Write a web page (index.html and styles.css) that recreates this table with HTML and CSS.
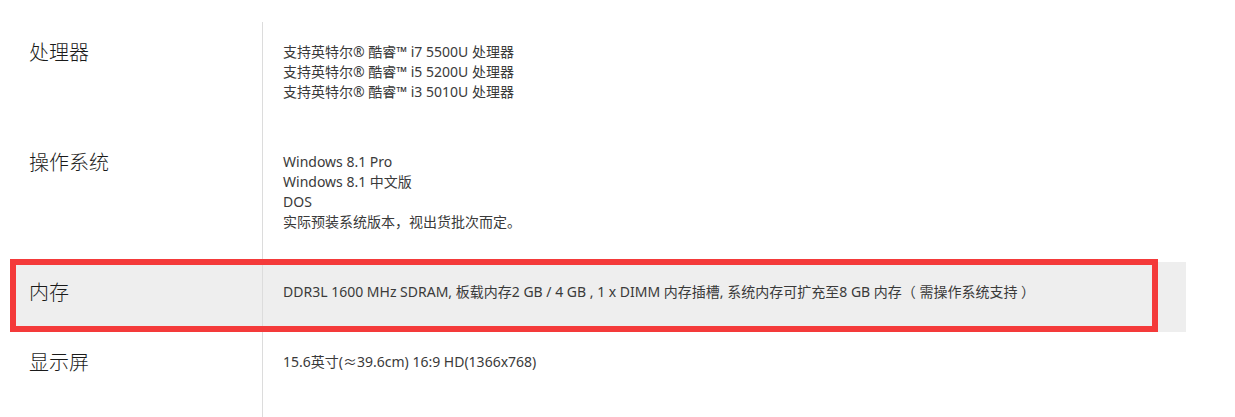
FILE: index.html
```html
<!DOCTYPE html>
<html lang="zh-CN">
<head>
<meta charset="utf-8">
<title>规格参数</title>
<link rel="stylesheet" href="styles.css">
</head>
<body>
<div class="specs">
  <div class="row">
    <div class="label">处理器</div>
    <div class="value">
      <p>支持英特尔® 酷睿™ i7 5500U 处理器</p>
      <p>支持英特尔® 酷睿™ i5 5200U 处理器</p>
      <p>支持英特尔® 酷睿™ i3 5010U 处理器</p>
    </div>
  </div>
  <div class="row">
    <div class="label">操作系统</div>
    <div class="value">
      <p>Windows 8.1 Pro</p>
      <p>Windows 8.1 中文版</p>
      <p>DOS</p>
      <p>实际预装系统版本，视出货批次而定。</p>
    </div>
  </div>
  <div class="row active">
    <div class="label">内存</div>
    <div class="value">
      <p>DDR3L 1600 MHz SDRAM, 板载内存2 GB / 4 GB , 1 x DIMM 内存插槽, 系统内存可扩充至8 GB 内存（ 需操作系统支持 ）</p>
    </div>
    <div class="highlight"></div>
  </div>
  <div class="row last">
    <div class="label">显示屏</div>
    <div class="value">
      <p>15.6英寸(≈39.6cm) 16:9 HD(1366x768)</p>
    </div>
  </div>
</div>
</body>
</html>
```

FILE: styles.css
```css
html, body {
  margin: 0;
  padding: 0;
  background: #fff;
}

body {
  font-family: "Noto Sans CJK SC", "Open Sans", sans-serif;
  color: #333;
  overflow: hidden;
}

.specs {
  margin: 22px 0 0 12px;
  width: 1174px;
}

.row {
  position: relative;
  display: grid;
  grid-template-columns: 250px 1fr;
}

.row.active {
  background: #eeeeee;
}

.label {
  padding: 20px 0 30px 17px;
  font-size: 20px;
  font-weight: 300;
  line-height: 20px;
  color: #1a1a1a;
}

.value {
  border-left: 1px solid #dcdcdc;
  padding: 20px 0 30px 20px;
  font-family: "Noto Sans", "Noto Sans CJK SC", sans-serif;
  font-size: 14px;
  line-height: 20px;
  color: #3a3a3a;
}

.value p {
  margin: 0;
}

.row.last .value {
  padding-bottom: 60px;
}

.highlight {
  position: absolute;
  left: -2px;
  top: -3px;
  width: 1148px;
  height: 73px;
  box-sizing: border-box;
  border: 6px solid #f43a3a;
  pointer-events: none;
}
```
